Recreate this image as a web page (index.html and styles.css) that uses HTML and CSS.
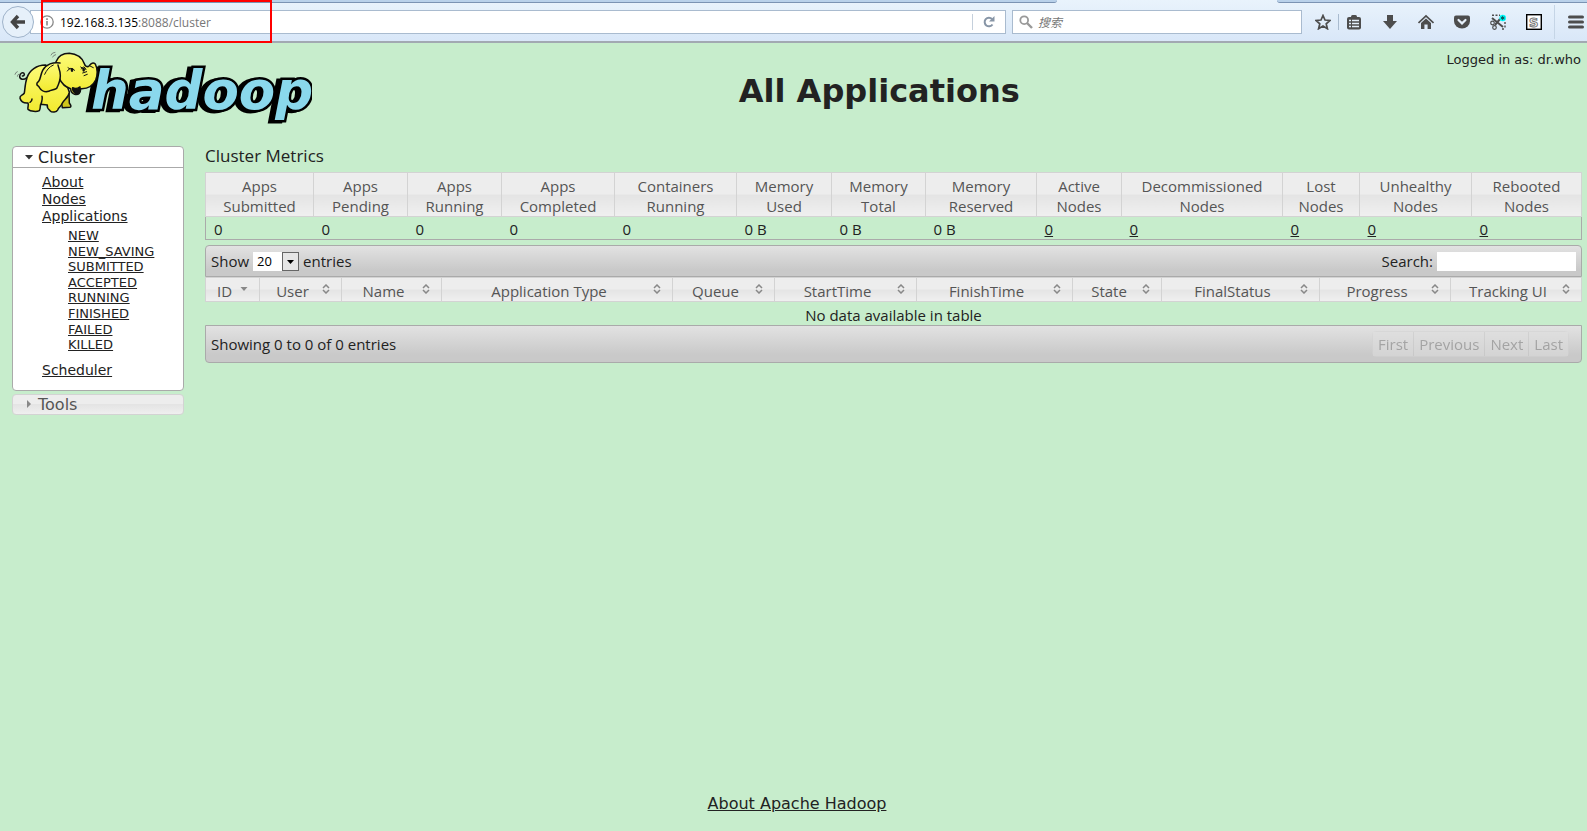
FILE: index.html
```
<!DOCTYPE html>
<html lang="zh-CN">
<head>
  <meta charset="UTF-8" />
  <meta name="viewport" content="width=device-width, initial-scale=1.0" />
  <title>All Applications</title>
  <link rel="stylesheet" href="styles.css">
</head>
<body>
  <div class="browser">
    <div class="tab-strip">
      <div class="tab-left"></div>
      <div class="tab-active"></div>
      <div class="tab-right"></div>
    </div>
    <div class="toolbar">
      <button class="back" aria-label="Back">
        <svg width="16" height="16" viewBox="0 0 16 16"><path d="M8 2L2.500 8L8 14M3 8H15" fill="none" stroke="#444" stroke-width="3.400"/></svg>
      </button>
      <div class="url-box">
        <svg class="info" width="14" height="14" viewBox="0 0 14 14"><circle cx="7" cy="7" r="6.200" fill="none" stroke="#888" stroke-width="1.300"/><path d="M7 6V10.500M7 3.300V5" stroke="#888" stroke-width="1.600"/></svg>
        <div class="url"><b>192.168.3.135</b>:8088/cluster</div>
        <button class="reload" aria-label="Reload">
          <svg width="14" height="14" viewBox="0 0 14 14"><path d="M10.500 9.500A4.300 4.300 0 1 1 10 4" fill="none" stroke="#8795a6" stroke-width="2"/><path d="M12.500 1V6.500H7Z" fill="#8795a6"/></svg>
        </button>
      </div>
      <div class="search-box">
        <svg width="14" height="14" viewBox="0 0 14 14"><circle cx="5.200" cy="5.200" r="3.900" fill="none" stroke="#999" stroke-width="1.800"/><path d="M8 8L13 13" stroke="#999" stroke-width="2.400"/></svg>
        <input type="text" placeholder="搜索" aria-label="搜索" />
      </div>
      <div class="tools">
        <button aria-label="Bookmark"><svg width="16" height="16" viewBox="0 0 16 16"><path d="M8 1.500L10 6L15 6.500L11.200 9.800L12.400 14.700L8 12L3.600 14.700L4.800 9.800L1 6.500L6 6Z" fill="none" stroke="#4d4d4d" stroke-width="1.700"/></svg></button>
        <i class="sep"></i>
        <button aria-label="Bookmarks list"><svg width="16" height="16" viewBox="0 0 16 16"><rect x="1" y="3" width="14" height="12.500" rx="2" fill="#4d4d4d"/><path d="M5 4V2.500Q5 1 6.500 1H9.500Q11 1 11 2.500V4Z" fill="#4d4d4d"/><path d="M3 6.500H5M6 6.500H13M3 9.500H5M6 9.500H13M3 12.500H5M6 12.500H13" stroke="#e4effa" stroke-width="1.400"/></svg></button>
        <button aria-label="Downloads"><svg width="16" height="16" viewBox="0 0 16 16"><path d="M5 1H11V7H15L8 15L1 7H5Z" fill="#4d4d4d"/></svg></button>
        <button aria-label="Home"><svg width="16" height="16" viewBox="0 0 16 16"><path d="M.500 9L8 2L15.500 9" fill="none" stroke="#4d4d4d" stroke-width="1.700"/><path d="M3 9L8 4.500L13 9V15H9.600V10.500H6.400V15H3Z" fill="#4d4d4d"/></svg></button>
        <button aria-label="Pocket"><svg width="16" height="16" viewBox="0 0 16 16"><path d="M2 1.500H14Q16 1.500 16 3.500V7A8 7.500 0 0 1 0 7V3.500Q0 1.500 2 1.500Z" fill="#4d4d4d"/><path d="M4.500 6L8 9.400L11.500 6" fill="none" stroke="#e8f1fb" stroke-width="2.200" stroke-linecap="round"/></svg></button>
        <button aria-label="Screenshot"><svg width="16" height="16" viewBox="0 0 16 16"><path d="M2 1.200H10M15 8V15M12 15H15" fill="none" stroke="#4d4d4d" stroke-width="1.400" stroke-dasharray="2 1.500"/><path d="M2 4L13 13M5 11L10 5" stroke="#4d4d4d" stroke-width="2"/><circle cx="2.500" cy="9" r="1.800" fill="none" stroke="#4d4d4d" stroke-width="1.200"/><circle cx="4.500" cy="13.500" r="1.800" fill="none" stroke="#4d4d4d" stroke-width="1.200"/><circle cx="12.700" cy="4" r="3.300" fill="#0ff"/><path d="M12.700 1.800V6.200M10.800 3L14.600 5M10.800 5L14.600 3" stroke="#155" stroke-width="1"/></svg></button>
        <button aria-label="S"><svg width="16" height="16" viewBox="0 0 16 16"><rect x=".700" y=".700" width="14.600" height="14.600" fill="#fff" stroke="#000" stroke-width="1.400"/><text x="3" y="13" class="s-icon">S</text></svg></button>
        <i class="sep tall"></i>
        <button class="menu" aria-label="Menu"><svg width="16" height="16" viewBox="0 0 16 16"><path d="M1.500 3H14.500M1.500 8H14.500M1.500 13H14.500" stroke="#4d4d4d" stroke-width="3" stroke-linecap="round"/></svg></button>
      </div>
    </div>
    <div class="mark"></div>
  </div>

  <div class="page">
    <div class="header">
      <svg class="logo" width="300" height="76" viewBox="12 48 300 76" role="img" aria-label="hadoop">
        <defs>
          <linearGradient id="skin" x1="0" y1="0" x2="0" y2="1"><stop offset="0" stop-color="#fcfb78"/><stop offset="1" stop-color="#f2ea2e"/></linearGradient>
        </defs>
        <text class="word" x="91" y="109">hadoop</text>
        <!-- elephant -->
        <g transform="translate(10 45) scale(.3333)" fill="url(#skin)" stroke="#111" stroke-width="4.500" stroke-linejoin="round" stroke-linecap="round">
          <path d="M50 98C42 106 30 104 29 95C29 86 37 80 42 85C45 89 41 94 37 93" fill="none"/>
          <path d="M152 168C156 176 156 182 157 188L180 187C186 184 181 178 178 174L177 140Z" fill="#cfc61c"/>
          <path d="M106 60C80 60 58 76 51 98C45 115 45 132 43 144C38 152 28 150 30 160C33 170 42 175 54 174C57 182 52 186 54 193C62 200 80 201 88 197C92 190 90 184 92 178L112 180C110 188 114 192 120 197C126 204 140 202 143 195C146 186 154 184 156 176C162 164 176 158 178 142L160 90Z"/>
          <path d="M93 178C96 168 98 160 96 154M60 172C64 170 66 166 66 162" fill="none"/>
          <path d="M138 50C144 34 160 25 178 25C200 27 216 39 222 54C225 64 232 68 238 62C243 54 250 52 256 57C262 70 263 90 257 105C249 122 232 132 212 131C212 143 206 151 194 148C184 144 182 136 182 131C166 126 154 114 148 100Z"/>
          <path d="M188 128C196 134 204 130 210 126C212 140 206 148 196 145C190 141 187 135 188 128Z" fill="#111"/>
          <path d="M150 54C130 50 108 58 98 76C91 90 92 102 86 109C79 114 78 120 86 124C92 136 104 143 116 139C122 134 132 136 140 130C146 118 151 104 151 92C152 78 145 68 144 60"/>
        </g>
        <g transform="translate(10 45) scale(.3333)" fill="none" stroke="#111" stroke-width="3" stroke-linecap="round">
          <path d="M172 78Q182 62 194 76M174 68L180 72M214 72Q222 58 228 74M212 66L218 70M218 84L230 80M222 92L232 88M240 63L250 68M104 88C110 76 116 66 130 60"/>
          <path d="M123 30Q126 22 135 22M128 36Q130 30 137 29M15 88Q16 82 22 80M22 94Q22 88 27 87" stroke="#555" stroke-width="2"/>
          <ellipse cx="186" cy="75" rx="4" ry="6" fill="#111" stroke="none"/>
          <ellipse cx="221" cy="74" rx="4" ry="6" fill="#111" stroke="none"/>
        </g>
      </svg>
      <h1>All Applications</h1>
      <div class="user">Logged in as: dr.who</div>
    </div>

    <div class="main">
      <div class="nav">
        <div class="nav-box">
          <h3><svg width="8" height="5" viewBox="0 0 8 5"><path d="M0 0H8L4 4.500Z" fill="#333"/></svg>Cluster</h3>
          <ul>
            <li><a href="#">About</a></li>
            <li><a href="#">Nodes</a></li>
            <li><a href="#">Applications</a>
              <ul>
                <li><a href="#">NEW</a></li>
                <li><a href="#">NEW_SAVING</a></li>
                <li><a href="#">SUBMITTED</a></li>
                <li><a href="#">ACCEPTED</a></li>
                <li><a href="#">RUNNING</a></li>
                <li><a href="#">FINISHED</a></li>
                <li><a href="#">FAILED</a></li>
                <li><a href="#">KILLED</a></li>
              </ul>
            </li>
            <li><a href="#">Scheduler</a></li>
          </ul>
        </div>
        <h3 class="closed"><svg width="8" height="8" viewBox="0 0 8 8"><path d="M2 0L6 4L2 8Z" fill="#888"/></svg>Tools</h3>
      </div>

      <div class="content">
        <h2>Cluster Metrics</h2>
        <table class="metrics">
          <colgroup><col><col><col><col><col><col><col><col><col><col><col><col><col></colgroup>
          <thead>
            <tr>
              <th>Apps<br>Submitted</th>
              <th>Apps<br>Pending</th>
              <th>Apps<br>Running</th>
              <th>Apps<br>Completed</th>
              <th>Containers<br>Running</th>
              <th>Memory<br>Used</th>
              <th>Memory<br>Total</th>
              <th>Memory<br>Reserved</th>
              <th>Active<br>Nodes</th>
              <th>Decommissioned<br>Nodes</th>
              <th>Lost<br>Nodes</th>
              <th>Unhealthy<br>Nodes</th>
              <th>Rebooted<br>Nodes</th>
            </tr>
          </thead>
          <tbody>
            <tr>
              <td>0</td>
              <td>0</td>
              <td>0</td>
              <td>0</td>
              <td>0</td>
              <td>0 B</td>
              <td>0 B</td>
              <td>0 B</td>
              <td><a href="#">0</a></td>
              <td><a href="#">0</a></td>
              <td><a href="#">0</a></td>
              <td><a href="#">0</a></td>
              <td><a href="#">0</a></td>
            </tr>
          </tbody>
        </table>

        <div class="bar top">
          <div class="length">
            <label for="length">Show</label>
            <span class="select">
              <select id="length"><option>20</option><option>50</option><option>100</option></select>
              <svg width="17" height="19" viewBox="0 0 17 19"><rect x=".500" y=".500" width="16" height="18" fill="#e6e6e6" stroke="#666"/><path d="M5 8H12L8.500 12Z"/></svg>
            </span>
            entries
          </div>
          <div class="filter">
            <label for="filter">Search:</label>
            <input type="text" id="filter" />
          </div>
        </div>
        <table class="apps">
          <colgroup><col><col><col><col><col><col><col><col><col><col><col></colgroup>
          <thead>
            <tr>
              <th><div><span>ID</span><svg width="8" height="10" viewBox="0 0 8 10"><path class="down" d="M.500 3H7.500L4 7Z"/></svg></div></th>
              <th><div><span>User</span><svg width="8" height="10" viewBox="0 0 8 10"><path d="M1 4L4 1L7 4M1 6L4 9L7 6"/></svg></div></th>
              <th><div><span>Name</span><svg width="8" height="10" viewBox="0 0 8 10"><path d="M1 4L4 1L7 4M1 6L4 9L7 6"/></svg></div></th>
              <th><div><span>Application Type</span><svg width="8" height="10" viewBox="0 0 8 10"><path d="M1 4L4 1L7 4M1 6L4 9L7 6"/></svg></div></th>
              <th><div><span>Queue</span><svg width="8" height="10" viewBox="0 0 8 10"><path d="M1 4L4 1L7 4M1 6L4 9L7 6"/></svg></div></th>
              <th><div><span>StartTime</span><svg width="8" height="10" viewBox="0 0 8 10"><path d="M1 4L4 1L7 4M1 6L4 9L7 6"/></svg></div></th>
              <th><div><span>FinishTime</span><svg width="8" height="10" viewBox="0 0 8 10"><path d="M1 4L4 1L7 4M1 6L4 9L7 6"/></svg></div></th>
              <th><div><span>State</span><svg width="8" height="10" viewBox="0 0 8 10"><path d="M1 4L4 1L7 4M1 6L4 9L7 6"/></svg></div></th>
              <th><div><span>FinalStatus</span><svg width="8" height="10" viewBox="0 0 8 10"><path d="M1 4L4 1L7 4M1 6L4 9L7 6"/></svg></div></th>
              <th><div><span>Progress</span><svg width="8" height="10" viewBox="0 0 8 10"><path d="M1 4L4 1L7 4M1 6L4 9L7 6"/></svg></div></th>
              <th><div><span>Tracking UI</span><svg width="8" height="10" viewBox="0 0 8 10"><path d="M1 4L4 1L7 4M1 6L4 9L7 6"/></svg></div></th>
            </tr>
          </thead>
          <tbody>
            <tr><td colspan="11">No data available in table</td></tr>
          </tbody>
        </table>
        <div class="bar bottom">
          <div>Showing 0 to 0 of 0 entries</div>
          <div class="pages">
            <button disabled>First</button>
            <button disabled>Previous</button>
            <button disabled>Next</button>
            <button disabled>Last</button>
          </div>
        </div>
      </div>
    </div>

    <div class="footer"><a href="#">About Apache Hadoop</a></div>
  </div>
</body>
</html>
```

FILE: styles.css
```
* { box-sizing: border-box; }
body {
  margin: 0;
  min-height: 100vh;
  display: flex;
  flex-direction: column;
  background: #c7edcc;
  color: #222;
  font-family: "DejaVu Sans", sans-serif;
  font-size: 14px;
}
a { color: #222; }
button {
  padding: 0;
  border: none;
  background: none;
  font: inherit;
}
svg { display: block; flex: none; }
h1, h2, h3, ul { margin: 0; padding: 0; }

/* browser bar */
.browser {
  position: relative;
  height: 43px;
  background: linear-gradient(#e9f3fc, #d9e7f8);
  border-bottom: 2px solid #a2a9b2;
  font-family: "Open Sans", "Noto Sans CJK SC", sans-serif;
}
.tab-strip {
  display: flex;
  height: 3px;
}
.tab-left,
.tab-right {
  background: #b9d1ea;
  border-bottom: 1px solid #7b93b3;
}
.tab-left { flex: 1; border-bottom-right-radius: 4px; }
.tab-active { width: 220px; }
.tab-right { width: 310px; border-bottom-left-radius: 4px; }
.toolbar {
  display: flex;
  align-items: center;
  height: 38px;
  padding-left: 2px;
}
.back {
  display: flex;
  align-items: center;
  justify-content: center;
  width: 32px;
  height: 32px;
  border: 1px solid #9fb3ca;
  border-radius: 50%;
  background: #e6f0fa;
  z-index: 1;
}
.url-box,
.search-box {
  display: flex;
  align-items: center;
  height: 24px;
  background: white;
  border: 1px solid #a9bbcf;
}
.url-box {
  flex: 1;
  margin-left: -4px;
  padding-left: 9px;
}
.url {
  flex: 1;
  margin-left: 6px;
  font-size: 12px;
  color: #777;
}
.url b { font-weight: normal; color: #000; }
.reload {
  width: 33px;
  height: 16px;
  padding-left: 9px;
  border-left: 1px solid #c5d0dc;
}
.search-box {
  width: 290px;
  margin-left: 6px;
  padding-left: 6px;
  gap: 5px;
}
.search-box input {
  flex: 1;
  min-width: 0;
  border: none;
  padding: 0;
  font-family: inherit;
  font-size: 12px;
}
.search-box input::placeholder { color: #777; font-style: italic; }
.tools {
  display: flex;
  align-items: center;
  gap: 20px;
  margin-left: 13px;
  padding-right: 3px;
}
.sep {
  width: 1px;
  height: 16px;
  margin: 0 -13px;
  background: #a9bbcf;
}
.sep.tall {
  height: 34px;
  margin: 0 -7px 0 -8px;
  background: #c5d5e6;
}
.s-icon {
  font: bold 13px "DejaVu Sans", sans-serif;
  fill: #fff;
  stroke: #777;
  stroke-width: 1px;
}
.mark {
  position: absolute;
  left: 41px;
  top: 0;
  width: 231px;
  height: 43px;
  border: 2px solid red;
}

/* page */
.page {
  flex: 1;
  display: flex;
  flex-direction: column;
  padding: 5px 5px 18px 12px;
}
.header {
  display: flex;
  justify-content: space-between;
  height: 98px;
}
.word {
  font: italic bold 53px "DejaVu Sans", sans-serif;
  fill: #8ad8ec;
  stroke: #000;
  stroke-width: 5px;
  paint-order: stroke;
  filter: drop-shadow(-4px 1px 0 #000);
}
h1 {
  padding-top: 23px;
  font-size: 32px;
  line-height: 40px;
}
.user {
  padding: 4px 1px 0 0;
  font-size: 13px;
}
.main { display: flex; gap: 21px; }
.nav { width: 172px; }
.nav h3 {
  display: flex;
  align-items: center;
  gap: 5px;
  height: 21px;
  padding-left: 12px;
  border-bottom: 1px solid #aaa;
  font-size: 16px;
  font-weight: normal;
}
.nav-box {
  background: white;
  border: 1px solid #aaa;
  border-radius: 4px;
}
.nav ul { list-style: none; }
.nav-box > ul {
  padding: 6px 0 11px 29px;
  line-height: 17px;
}
.nav ul ul {
  padding: 3px 0 9px 26px;
  font-size: 13px;
  line-height: 1.2;
}
.nav .closed {
  margin-top: 3px;
  border: 1px solid #d3d3d3;
  border-radius: 4px;
  background: linear-gradient(#ededed 50%, #e4e4e4 50%, #efefef);
  color: #555;
}
.content {
  flex: 1;
  min-width: 0;
  font-family: "Open Sans", sans-serif;
  font-size: 15px;
  line-height: 20px;
}
h2 {
  height: 26px;
  font-size: 17px;
  font-weight: normal;
}
table {
  width: 100%;
  table-layout: fixed;
  border-collapse: collapse;
}
th {
  padding: 0;
  border: 1px solid #d3d3d3;
  background: linear-gradient(#ededed 50%, #e4e4e4 50%, #f0f0f0);
  color: #555;
  font-weight: normal;
}
.metrics th { padding-top: 3px; }
.metrics td { padding: 2px 8px 0; }
.metrics tbody { border: 1px solid #aaa; }
.metrics col:nth-child(1) { width: 108px; }
.metrics col:nth-child(2) { width: 94px; }
.metrics col:nth-child(3) { width: 94px; }
.metrics col:nth-child(4) { width: 113px; }
.metrics col:nth-child(5) { width: 122px; }
.metrics col:nth-child(6) { width: 95px; }
.metrics col:nth-child(7) { width: 94px; }
.metrics col:nth-child(8) { width: 111px; }
.metrics col:nth-child(9) { width: 85px; }
.metrics col:nth-child(10) { width: 161px; }
.metrics col:nth-child(11) { width: 77px; }
.metrics col:nth-child(12) { width: 112px; }
.metrics col:nth-child(13) { width: 110px; }
.apps col:nth-child(1) { width: 54px; }
.apps col:nth-child(2) { width: 82px; }
.apps col:nth-child(3) { width: 100px; }
.apps col:nth-child(4) { width: 231px; }
.apps col:nth-child(5) { width: 102px; }
.apps col:nth-child(6) { width: 142px; }
.apps col:nth-child(7) { width: 156px; }
.apps col:nth-child(8) { width: 89px; }
.apps col:nth-child(9) { width: 158px; }
.apps col:nth-child(10) { width: 131px; }
.apps col:nth-child(11) { width: 131px; }
.bar {
  display: flex;
  align-items: center;
  justify-content: space-between;
  padding: 0 5px;
  border: 1px solid #aaa;
  background: linear-gradient(#e2e2e2, #c9c9c9 80%);
}
.bar.top {
  height: 32px;
  margin-top: 5px;
  border-radius: 4px 4px 0 0;
}
.bar.bottom {
  height: 38px;
  padding-right: 12px;
  border-radius: 0 0 4px 4px;
}
.length,
.filter {
  display: flex;
  align-items: center;
  gap: 4px;
}
.select {
  display: flex;
  width: 46px;
  background: white;
}
.select select {
  width: 29px;
  padding: 0 4px;
  border: none;
  background: none;
  appearance: none;
  font-family: inherit;
  font-size: 13px;
}
.filter input {
  width: 139px;
  height: 19px;
  border: none;
}
.apps th div {
  display: flex;
  padding: 3px 11px 0 3px;
}
.apps th span { flex: 1; }
.apps th svg {
  margin-top: 3px;
  fill: none;
  stroke: #888;
  stroke-width: 1.500px;
}
.apps .down { fill: #888; stroke: none; }
.apps td { padding: 3px 0 0; text-align: center; }
.pages {
  display: flex;
  border: 1px solid #d3d3d3;
  border-radius: 4px;
  opacity: 0.500;
}
.pages button {
  height: 24px;
  padding: 0 5px;
  background: #e0e0e0;
  color: #777;
}
.pages button + button { border-left: 1px solid #c8c8c8; }
.footer {
  margin-top: auto;
  text-align: center;
  font-size: 16px;
}
```
